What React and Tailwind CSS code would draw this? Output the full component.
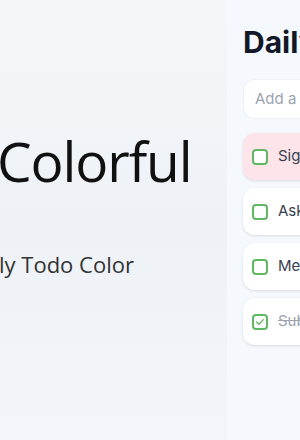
import React from "react";

const tasks = [
  { id: 1, text: "Sign the contract", done: false, bg: "bg-[#fce4e9]" },
  { id: 2, text: "Ask for feedback", done: false, bg: "bg-white" },
  { id: 3, text: "Meeting with team", done: false, bg: "bg-white" },
  { id: 4, text: "Submit the report", done: true, bg: "bg-white" },
];

function CheckBox({ checked }) {
  return (
    <span className="flex items-center justify-center w-4 h-4 shrink-0 rounded-[4px] border-2 border-[#5fb862] bg-white">
      {checked && (
        <svg width="10" height="10" viewBox="0 0 10 10" fill="none">
          <path d="M1.6 5 L4 7.3 L8.4 2.6" stroke="#5fb862" strokeWidth="1.3" strokeLinecap="round" strokeLinejoin="round" />
        </svg>
      )}
    </span>
  );
}

export default function App() {
  return (
    <div className="flex w-full h-[440px] overflow-hidden">
      {/* hero */}
      <div className="w-[227px] shrink-0 overflow-hidden bg-gradient-to-b from-[#f5f6f8] via-[#eef2f7] to-[#f2f5fa] pt-[133px] font-['Open_Sans',sans-serif]">
        <h1 className="whitespace-nowrap text-[55px] leading-[56px] font-normal tracking-[-0.02em] text-[#111111] -ml-[3px]">
          Colorful
        </h1>
        <p className="mt-[61px] whitespace-nowrap text-[22px] leading-7 text-[#333333] -ml-[1px]">
          ly Todo Color
        </p>
      </div>

      {/* todo panel */}
      <div className="w-[320px] shrink-0 bg-[#f5f8fc] px-4 pt-6 font-['Inter',sans-serif]">
        <h2 className="whitespace-nowrap text-3xl leading-9 font-bold text-[#111827]">
          Daily Todos
        </h2>
        <div className="mt-[19px] h-10 flex items-center rounded-xl bg-white border border-[#eef1f5] px-[11px]">
          <span className="text-[15px] text-[#9ca3af] whitespace-nowrap">Add a new task...</span>
        </div>
        <div className="mt-3.5 flex flex-col gap-2">
          {tasks.map((t) => (
            <div
              key={t.id}
              className={`h-[47px] flex items-center gap-2.5 pl-[9px] rounded-xl shadow-[0_1px_3px_rgba(0,0,0,0.12)] ${t.bg}`}
            >
              <CheckBox checked={t.done} />
              <span
                className={`text-[15px] whitespace-nowrap ${
                  t.done ? "text-[#9ca3af] line-through" : "text-[#374151]"
                }`}
              >
                {t.text}
              </span>
            </div>
          ))}
        </div>
      </div>
    </div>
  );
}
